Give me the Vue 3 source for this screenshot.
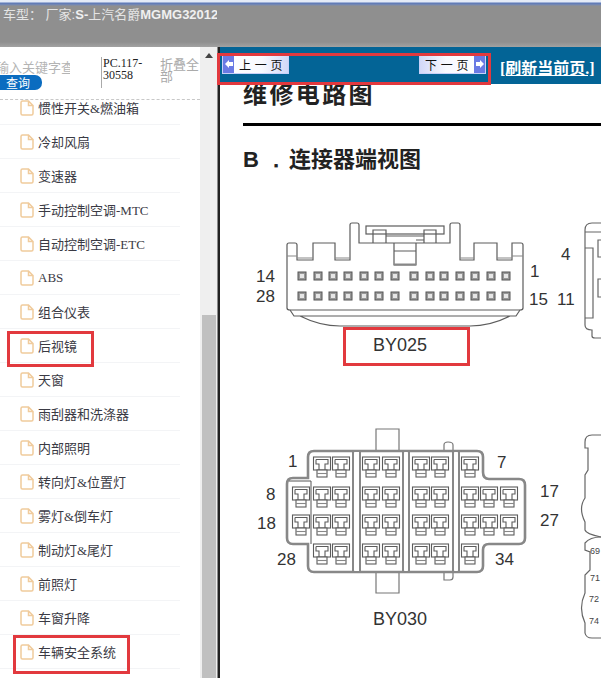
<template>
  <div class="page">
    <header class="top">
      <div class="top-text">车型： 厂家:<b>S-</b>上汽名爵<b>MGMG32012</b></div>
    </header>

    <div class="body">
      <aside class="side">
        <div class="search">
          <div class="search-box">
            <div class="keyword">输入关键字查询</div>
            <div class="query">查询</div>
          </div>
          <div class="code">PC.117-30558</div>
          <div class="fold">折叠全部</div>
        </div>
        <ul class="tree">
          <li v-for="item in items" :key="item" class="row">
            <svg class="file" width="14" height="16" viewBox="0 0 14 16">
              <path d="M1 2.5 Q1 1 2.5 1 H8.5 L13 5.5 V13.5 Q13 15 11.5 15 H2.5 Q1 15 1 13.5 Z M8.5 1 V5.5 H13" fill="#fff" stroke="#f0cb9c" stroke-width="1.5" />
            </svg>
            <span>{{ item }}</span>
          </li>
        </ul>
        <div class="mark mark-mirror"></div>
        <div class="mark mark-safety"></div>
      </aside>

      <div class="scroll">
        <div class="scroll-up"></div>
        <div class="scroll-thumb"></div>
      </div>
      <div class="split"></div>

      <main class="main">
        <div class="tools">
          <div class="pager">
            <button class="btn prev"><i class="arrow">
              <svg width="8" height="10" viewBox="0 0 8 10"><path d="M0 5 L4 1 V3 H8 V7 H4 V9 Z" fill="#fff" /></svg>
            </i><span>上 一 页</span></button>
            <button class="btn next"><span>下 一 页</span><i class="arrow">
              <svg width="8" height="10" viewBox="0 0 8 10"><path d="M8 5 L4 1 V3 H0 V7 H4 V9 Z" fill="#fff" /></svg>
            </i></button>
          </div>
          <a class="refresh">[刷新当前页.]</a>
        </div>

        <div class="doc">
          <h1 class="title">维修电路图</h1>
          <div class="rule"></div>
          <h2 class="sub"><span class="sub-b">B ．</span>连接器端视图</h2>

          <svg class="sheet" width="381" height="503" viewBox="220 175 381 503">
            <!-- BY025 -->
            <g fill="none" stroke="#5c5c5c" stroke-width="1.2">
              <path d="M287 256 V245 Q287 243 289 243 H295 Q297 243 297 245 V260 H313 V243 H335 V260 H350 V225 Q350 223 352 223 H357 Q359 223 359 225 V243 H450 V225 Q450 223 452 223 H458 Q460 223 460 225 V260 H474 V243 H497 V260 H512 V243 H521 Q523 243 523 245 V308 Q523 310 520 310 H290 Q287 310 287 308 Z" />
              <path d="M287 256 H297 M512 256 H523 M335 258 H350 M460 258 H474 M297 258 H313 M497 258 H512" stroke="#888" />
              <path d="M290 310 L294 316 H516 L520 310 M300 316 Q320 326 340 326 H470 Q490 326 510 316" />
              <rect x="366" y="226" width="78" height="8" />
              <path d="M373 243 V230 H386 V243 M424 243 V230 H436 V243 M386 236 H424 M386 243 V238 M394 243 V265 H416 V243 M394 251 H416 M416 240 H424" />
              <path d="M394 264.5 H416" stroke="#888" stroke-width="2" />
            </g>
            <g v-for="pin in pins025" :key="pin.x + '-' + pin.y">
              <rect :x="pin.x - 4" :y="pin.y - 4" width="8" height="8" fill="#999" stroke="#555" stroke-width="1" />
              <rect :x="pin.x - 2" :y="pin.y - 2" width="4" height="4" fill="#e6e6e6" />
            </g>

            <!-- right cut off connector -->
            <g fill="none" stroke="#666" stroke-width="1.2">
              <path d="M601 223 H592 Q585 223 585 230 V325 Q585 330 592 330 V336 Q592 338 595 338 H601" />
              <path d="M585 232 H601 M585 248 H593 V318 H585" />
              <path d="M601 240 H598 V257 H601 M601 279 H598 V297 H601" />
            </g>

            <!-- BY030 -->
            <g fill="none" stroke="#777">
              <path d="M376 450 V429 H399 V450 M376 573 V593 H399 V573 M444 450 V445 Q444 442 448 442 Q453 442 453 445 V450 M444 573 V580 H450 Q453 580 453 577 V573" stroke-width="1.2" />
              <path d="M314 451 H477 Q483 451 483 457 V472 Q483 479 489 479 H519 Q525 479 525 485 V538 Q525 544 519 544 H489 Q483 544 483 550 V566 Q483 572 477 572 H314 Q308 572 308 566 V544 H293 Q287 544 287 538 V484 Q287 478 293 478 H308 V457 Q308 451 314 451 Z" stroke="#888" stroke-width="2.6" />
              <path d="M353 451 V572 M360 451 V572 M403 451 V572 M409 451 V572 M453 451 V572 M459 451 V572" stroke="#888" stroke-width="2" />
              <path d="M289 481 H311 V544" stroke-width="1" stroke="#555" />
            </g>
            <rect x="354.5" y="452" width="4.5" height="119" fill="#fff" />
            <rect x="404.5" y="452" width="3" height="119" fill="#fff" />
            <rect x="454.5" y="452" width="3" height="119" fill="#fff" />
            <g v-for="cell in cells030" :key="cell.x + '-' + cell.y" :transform="`translate(${cell.x} ${cell.y})`" fill="none" stroke="#5c5c5c" stroke-width="1.1">
              <rect x="-8.5" y="-8" width="17" height="13" fill="#fff" />
              <path d="M-6 -5.5 H6 V-1 H3 V5 M-6 -5.5 V-1 H-3 V5" />
              <rect x="-5" y="5" width="10" height="7" fill="#fff" />
              <path d="M-5 8.5 H5" stroke="#888" />
            </g>

            <!-- second cut off connector -->
            <g fill="none" stroke="#666" stroke-width="1.2">
              <path d="M601 435 H592 Q585 435 585 442 V448 H588 V470 L585 475 V498 Q578 508 585 522 V530 Q586 534 601 537" />
              <path d="M601 537 Q590 537 585 543 V550 L590 552 V570 L585 575 V593 Q578 608 585 623 V633 Q586 638 592 638 H601" />
            </g>

            <text v-for="t in labels" :key="t.s + t.x" class="num" :x="t.x" :y="t.y">{{ t.s }}</text>
            <text v-for="t in tiny" :key="t.s" class="tiny" :x="t.x" :y="t.y">{{ t.s }}</text>
            <text class="name" x="373" y="351">BY025</text>
            <text class="name" x="373" y="625">BY030</text>

            <rect x="344.5" y="328.5" width="124" height="36" fill="none" stroke="#e2393e" stroke-width="3" />
          </svg>
        </div>

        <div class="mark mark-pager"></div>
      </main>
    </div>
  </div>
</template>

<script setup>
const items = [
  '惯性开关&燃油箱', '冷却风扇', '变速器', '手动控制空调-MTC', '自动控制空调-ETC', 'ABS',
  '组合仪表', '后视镜', '天窗', '雨刮器和洗涤器', '内部照明', '转向灯&位置灯', '雾灯&倒车灯',
  '制动灯&尾灯', '前照灯', '车窗升降', '车辆安全系统',
]

const pinX = [302, 318, 333, 348, 364, 379, 395, 414, 430, 444, 460, 475, 491, 506]
const pins025 = [276, 296].flatMap((y) => pinX.map((x) => ({ x, y })))

const shortRow = [322, 341, 371, 391, 421, 440, 470]
const longRow = [301, ...shortRow, 489, 509]
const cells030 = [
  ...shortRow.map((x) => ({ x, y: 465 })),
  ...longRow.map((x) => ({ x, y: 495 })),
  ...longRow.map((x) => ({ x, y: 523 })),
  ...shortRow.map((x) => ({ x, y: 552 })),
]

const labels = [
  { s: '14', x: 256, y: 282 }, { s: '28', x: 256, y: 302 }, { s: '1', x: 530, y: 277 },
  { s: '15', x: 529, y: 305 }, { s: '4', x: 561, y: 260 }, { s: '11', x: 557, y: 305 },
  { s: '1', x: 288, y: 467 }, { s: '7', x: 497, y: 468 }, { s: '8', x: 266, y: 500 },
  { s: '18', x: 257, y: 529 }, { s: '28', x: 277, y: 565 }, { s: '17', x: 540, y: 497 },
  { s: '27', x: 540, y: 526 }, { s: '34', x: 495, y: 565 },
]
const tiny = [
  { s: '69', x: 590, y: 554 }, { s: '71', x: 590, y: 581 },
  { s: '72', x: 589, y: 602 }, { s: '74', x: 589, y: 624 },
]
</script>

<style>
html, body { margin: 0; overflow: hidden; }
</style>

<style scoped>
.page {
  width: 601px;
  height: 678px;
  overflow: hidden;
  display: flex;
  flex-direction: column;
  background: #fff;
  font-family: "Liberation Serif", "Noto Sans CJK SC", serif;
}

.top {
  height: 47px;
  box-sizing: border-box;
  flex: none;
  background: linear-gradient(#e4ebf7 0, #e4ebf7 2px, #5a77b8 3px, #7a8bb0 5px, #8f8f8f 6px, #8f8f8f 42px, #a2a2a2 47px);
  padding-top: 6px;
  overflow: hidden;
}
.top-text {
  width: 217px;
  padding-left: 3px;
  box-sizing: border-box;
  white-space: nowrap;
  overflow: hidden;
  color: #e4e4e4;
  font: 13px/18px "Liberation Sans", "Noto Sans CJK SC", sans-serif;
}
.top-text b { font-weight: 700; color: #f0f0f0; }

.body {
  flex: 1;
  display: flex;
  min-height: 0;
}

.side {
  position: relative;
  width: 200px;
  flex: none;
  overflow: hidden;
  display: flex;
  flex-direction: column;
}

.search {
  height: 53px;
  flex: none;
  box-sizing: border-box;
  border-bottom: 1px dashed #c8c8c8;
  display: flex;
  position: relative;
}
.search-box { width: 70px; margin-left: 0; overflow: hidden; padding-top: 12px; flex: none; }
.keyword {
  margin-left: -4px;
  white-space: nowrap;
  color: #b4b4b4;
  font: 13px/16px "Noto Sans CJK SC", sans-serif;
}
.query {
  width: 42px;
  height: 15px;
  background: #0a6cc0;
  color: #fff;
  border-radius: 0 7px 7px 0;
  font: 12px/15px "Noto Sans CJK SC", sans-serif;
  padding-left: 6px;
  box-sizing: border-box;
}
.code {
  margin: 10px 0 0 31px;
  width: 44px;
  height: 31px;
  padding-left: 1px;
  border-left: 1px solid #aaa;
  box-sizing: content-box;
  color: #222;
  font-size: 12px;
  line-height: 12px;
}
.fold {
  margin: 11px 0 0 13px;
  width: 40px;
  flex: none;
  color: #aaa;
  font: 13px/12px "Noto Sans CJK SC", sans-serif;
}

.tree {
  list-style: none;
  margin: -9px 0 0;
  padding: 0;
}
.row {
  width: 180px;
  height: 34px;
  box-sizing: border-box;
  padding-left: 20px;
  border-bottom: 1px solid #f3f4f6;
  display: flex;
  align-items: center;
  gap: 4px;
  color: #3a3a44;
  font-size: 13px;
  white-space: nowrap;
}
.file { flex: none; }

.mark {
  position: absolute;
  box-sizing: border-box;
  border: 3px solid #e2393e;
}
.mark-mirror { left: 7px; top: 284px; width: 87px; height: 36px; }
.mark-safety { left: 13px; top: 588px; width: 117px; height: 39px; }
.mark-pager { left: -3px; top: 6px; width: 274px; height: 32px; }

.scroll {
  width: 17px;
  flex: none;
  background: #efefef;
  position: relative;
  display: flex;
  flex-direction: column;
  align-items: center;
}
.scroll-up {
  margin-top: 6px;
  width: 0;
  height: 0;
  border-left: 4px solid transparent;
  border-right: 4px solid transparent;
  border-bottom: 5px solid #444;
}
.scroll-thumb {
  margin-top: 257px;
  width: 14px;
  flex: 1;
  background: #c0c0c0;
}

.split {
  width: 3px;
  flex: none;
  background: linear-gradient(90deg, #8a8a8a 0, #8a8a8a 1px, #222 1px);
}

.main {
  position: relative;
  flex: 1;
  min-width: 0;
  display: flex;
  flex-direction: column;
}

.tools {
  height: 37px;
  flex: none;
  background: #036496;
  display: flex;
  align-items: center;
  padding-left: 2px;
  position: relative;
}
.pager {
  width: 264px;
  display: flex;
  justify-content: space-between;
  margin-top: -3px;
}
.btn {
  width: 67px;
  height: 19px;
  padding: 0;
  border: 1px solid #c8d0f8;
  background: linear-gradient(90deg, #fff 0, #f8f9ff 60%, #d2d8f8 100%);
  display: flex;
  align-items: center;
  color: #111;
  font: 12px/17px "Noto Sans CJK SC", sans-serif;
  letter-spacing: 0.5px;
}
.btn span { flex: 1; text-align: center; white-space: nowrap; }
.arrow {
  width: 11px;
  height: 100%;
  flex: none;
  background: #6a7ae4;
  display: flex;
  align-items: center;
  justify-content: center;
}
.next { background: linear-gradient(90deg, #d2d8f8 0, #f8f9ff 40%, #fff 100%); }
.refresh {
  margin-left: 14px;
  padding-top: 3px;
  color: #fff;
  font-weight: 700;
  font-size: 16px;
  text-decoration: underline;
  white-space: nowrap;
}

.doc {
  flex: 1;
  overflow: hidden;
  min-height: 0;
}
.title {
  margin: -5px 0 0 23px;
  font: 700 24px/28px "Noto Sans CJK SC", sans-serif;
  letter-spacing: 2.4px;
  color: #222;
}
.rule {
  margin: 16px 0 0 23px;
  height: 3px;
  background: #000;
}
.sub {
  margin: 19px 0 0 23px;
  height: 24px;
  font: 700 22px/24px "Noto Sans CJK SC", sans-serif;
  color: #222;
  white-space: nowrap;
}
.sub-b { display: inline-block; width: 46px; font-family: "Liberation Sans", sans-serif; }
.sheet { display: block; margin-top: 6px; }
.num { font: 17px "Liberation Sans", sans-serif; fill: #333; }
.name { font: 18px "Liberation Sans", sans-serif; fill: #333; }
.tiny { font: 9px "Liberation Sans", sans-serif; fill: #444; }
</style>
